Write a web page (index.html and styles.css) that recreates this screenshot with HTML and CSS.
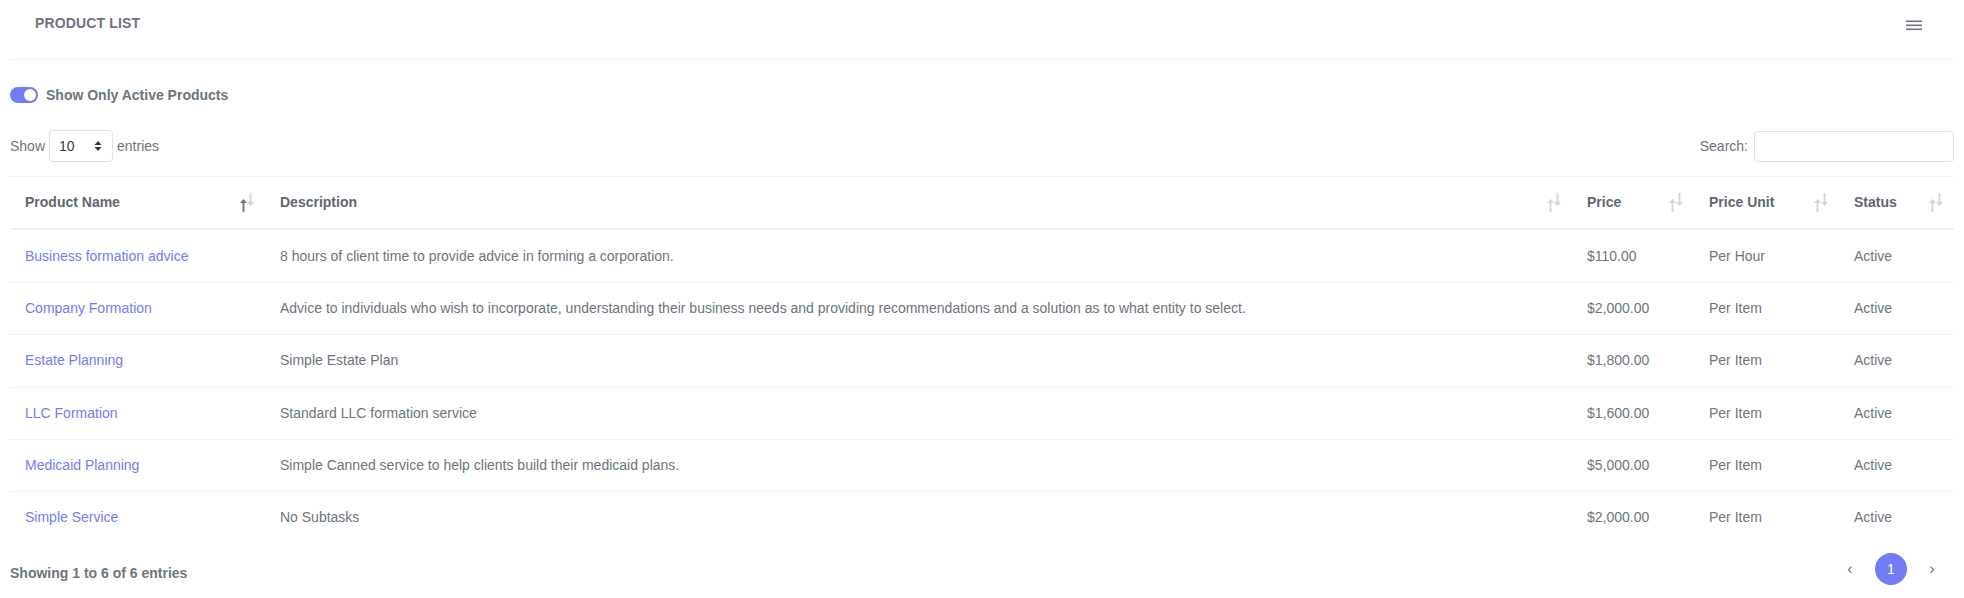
FILE: index.html
```html
<!DOCTYPE html>
<html lang="en">
<head>
    <meta charset="UTF-8">
    <meta name="viewport" content="width=device-width, initial-scale=1.0">
    <title>Product List</title>
    <link rel="stylesheet" href="styles.css">
</head>
<body>

    <div class="page">
        <div class="header">
            <h4 class="header-title">Product List</h4>
            <button class="menu-btn" aria-label="Menu">
                <svg width="16" height="12" viewBox="0 0 16 12">
                    <rect x="0" y="1.5" width="16" height="1.6" fill="#6c757d"/>
                    <rect x="0" y="5.5" width="16" height="1.6" fill="#6c757d"/>
                    <rect x="0" y="9.5" width="16" height="1.6" fill="#6c757d"/>
                </svg>
            </button>
        </div>

        <label class="switch-row">
            <span class="switch"><span class="knob"></span></span>
            <span class="switch-label">Show Only Active Products</span>
        </label>

        <div class="controls">
            <div class="length">
                Show
                <span class="select">
                    10
                    <svg width="8" height="12" viewBox="0 0 8 12">
                        <path d="M4 1 L7.5 5 H0.5 Z M4 11 L0.5 7 H7.5 Z" fill="#343a40"/>
                    </svg>
                </span>
                entries
            </div>
            <div class="search">
                Search: <input type="search">
            </div>
        </div>

        <table class="products">
            <colgroup>
                <col style="width: 255px">
                <col>
                <col style="width: 122px">
                <col style="width: 145px">
                <col style="width: 115px">
            </colgroup>
            <thead>
                <tr>
                    <th class="sort active">Product Name</th>
                    <th class="sort">Description</th>
                    <th class="sort">Price</th>
                    <th class="sort">Price Unit</th>
                    <th class="sort">Status</th>
                </tr>
            </thead>
            <tbody id="product-rows"></tbody>
        </table>

        <div class="footer">
            <div class="info">Showing 1 to 6 of 6 entries</div>
            <div class="pager">
                <span class="page-link">&lsaquo;</span>
                <span class="page-link current">1</span>
                <span class="page-link">&rsaquo;</span>
            </div>
        </div>
    </div>

    <script>
        const products = [
            { name: "Business formation advice", desc: "8 hours of client time to provide advice in forming a corporation.", price: "$110.00", unit: "Per Hour", status: "Active" },
            { name: "Company Formation", desc: "Advice to individuals who wish to incorporate, understanding their business needs and providing recommendations and a solution as to what entity to select.", price: "$2,000.00", unit: "Per Item", status: "Active" },
            { name: "Estate Planning", desc: "Simple Estate Plan", price: "$1,800.00", unit: "Per Item", status: "Active" },
            { name: "LLC Formation", desc: "Standard LLC formation service", price: "$1,600.00", unit: "Per Item", status: "Active" },
            { name: "Medicaid Planning", desc: "Simple Canned service to help clients build their medicaid plans.", price: "$5,000.00", unit: "Per Item", status: "Active" },
            { name: "Simple Service", desc: "No Subtasks", price: "$2,000.00", unit: "Per Item", status: "Active" }
        ];

        const tbody = document.getElementById("product-rows");
        products.forEach(p => {
            const tr = document.createElement("tr");
            tr.innerHTML = `
                <td><a href="#">${p.name}</a></td>
                <td>${p.desc}</td>
                <td>${p.price}</td>
                <td>${p.unit}</td>
                <td>${p.status}</td>`;
            tbody.appendChild(tr);
        });
    </script>

</body>
</html>
```

FILE: styles.css
```css
body {
    font-family: "Liberation Sans", Arial, sans-serif;
    font-size: 14px;
    color: #6c757d;
    margin: 0;
    background: #fff;
}
.page {
    padding: 0 10px;
}
.header {
    display: flex;
    justify-content: space-between;
    align-items: flex-start;
    height: 59px;
    border-bottom: 1px solid #eef2f7;
    padding: 0 32px 0 25px;
}
.header-title {
    margin: 13px 0 0;
    font-size: 14px;
    line-height: 20px;
    font-weight: 700;
    text-transform: uppercase;
    letter-spacing: 0.15px;
    color: #6c757d;
}
.menu-btn {
    background: none;
    border: none;
    padding: 0;
    margin-top: 19px;
    cursor: pointer;
    line-height: 0;
}
.switch-row {
    display: flex;
    align-items: center;
    gap: 8px;
    margin-top: 26px;
    height: 18px;
}
.switch {
    width: 28px;
    height: 16px;
    border-radius: 8px;
    background: #727cf5;
    display: flex;
    align-items: center;
    justify-content: flex-end;
    padding: 0 2px;
    box-sizing: border-box;
}
.knob {
    width: 12px;
    height: 12px;
    border-radius: 50%;
    background: #fff;
}
.switch-label {
    font-weight: 700;
    line-height: 18px;
}
.controls {
    display: flex;
    justify-content: space-between;
    align-items: center;
    margin-top: 26px;
    height: 32px;
}
.length {
    display: flex;
    align-items: center;
    gap: 4px;
}
.select {
    display: flex;
    align-items: center;
    justify-content: space-between;
    width: 64px;
    height: 32px;
    box-sizing: border-box;
    border: 1px solid #dee2e6;
    border-radius: 4px;
    padding: 0 10px 0 9px;
    color: #343a40;
}
.search {
    display: flex;
    align-items: center;
    gap: 6px;
}
.search input {
    width: 200px;
    height: 31px;
    box-sizing: border-box;
    border: 1px solid #dee2e6;
    border-radius: 4px;
    margin: 0;
}
.products {
    width: 100%;
    table-layout: fixed;
    border-collapse: collapse;
    margin-top: 14px;
}
.products th,
.products td {
    text-align: left;
    padding: 15.2px 15px;
    line-height: 21px;
}
.products th {
    font-weight: 700;
    color: #5f6872;
    border-top: 1px solid #eef2f7;
    border-bottom: 2px solid #eef2f7;
}
.products td {
    border-bottom: 1px solid #eef2f7;
}
.products tbody tr:last-child td {
    border-bottom: none;
}
.products a {
    color: #727cf5;
    text-decoration: none;
}
.sort {
    position: relative;
}
.sort::before,
.sort::after {
    content: "";
    position: absolute;
    width: 7px;
    height: 13px;
    background-repeat: no-repeat;
    opacity: 0.3;
}
.sort::before {
    right: 18px;
    bottom: 16px;
    background-image: url("data:image/svg+xml,%3Csvg xmlns='http://www.w3.org/2000/svg' width='7' height='13' viewBox='0 0 7 13'%3E%3Cpath d='M3.5 0 L7 4 H4.4 V13 H2.6 V4 H0 Z' fill='%236c757d'/%3E%3C/svg%3E");
}
.sort::after {
    right: 11px;
    bottom: 22px;
    background-image: url("data:image/svg+xml,%3Csvg xmlns='http://www.w3.org/2000/svg' width='7' height='13' viewBox='0 0 7 13'%3E%3Cpath d='M3.5 13 L0 9 H2.6 V0 H4.4 V9 H7 Z' fill='%236c757d'/%3E%3C/svg%3E");
}
.sort.active::before {
    opacity: 1;
}
.footer {
    display: flex;
    justify-content: space-between;
    align-items: center;
    margin-top: 9px;
    height: 32px;
}
.info {
    font-weight: 700;
    margin-top: 8px;
}
.pager {
    display: flex;
    align-items: center;
    gap: 9px;
    margin-right: 6px;
}
.page-link {
    width: 32px;
    height: 32px;
    border-radius: 50%;
    display: flex;
    align-items: center;
    justify-content: center;
    color: #6c757d;
    font-size: 16px;
}
.page-link.current {
    background: #727cf5;
    color: #fff;
    font-size: 14px;
}
```
